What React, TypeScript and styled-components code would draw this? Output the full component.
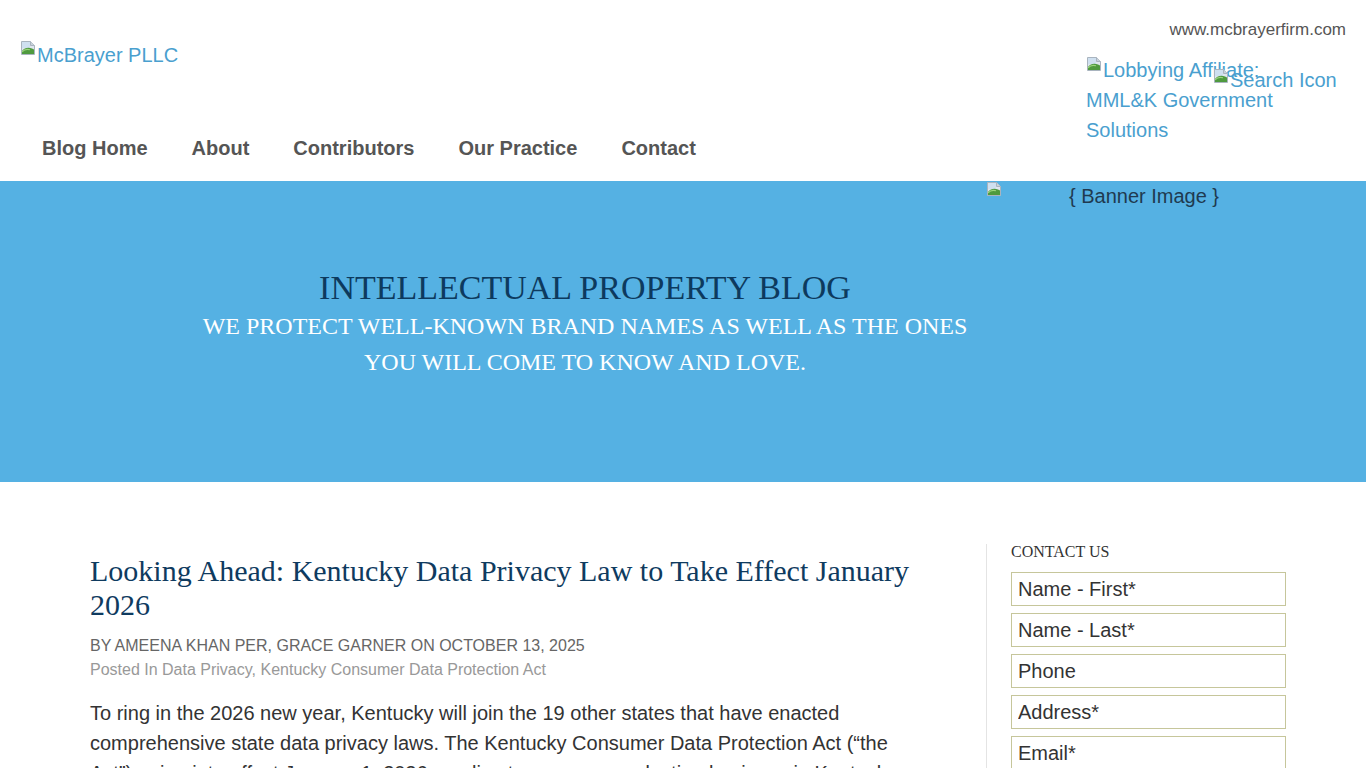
import React from 'react'
import styled, { createGlobalStyle } from 'styled-components'

const GlobalStyle = createGlobalStyle`
  html, body {
    margin: 0;
    padding: 0;
    background: #fff;
  }
  body {
    font-family: 'Liberation Sans', Arial, sans-serif;
    color: #333;
  }
  * {
    box-sizing: border-box;
  }
`

// the little "broken image" glyph that Chrome shows next to alt text
const BrokenIcon = () => (
  <IconSvg width='16' height='16' viewBox='0 0 16 16' aria-hidden='true'>
    <path d='M1.5 1.5h9l4 4v9h-13z' fill='#dfe6ee' stroke='#a9b4bf' />
    <path d='M10.5 1.5v4h4' fill='#c9d2db' stroke='#a9b4bf' />
    <path d='M2 2h8v6H2z' fill='#cfe0f0' />
    <path d='M2 14V11c2.5-3 6-4 10-2.4L14 9.5V14z' fill='#4f9a3f' />
    <path d='M2 11.8c2.2-2.3 5-3 8-2' fill='none' stroke='#9bd47c' strokeWidth='1.2' />
  </IconSvg>
)

const navItems = ['Blog Home', 'About', 'Contributors', 'Our Practice', 'Contact']

const fields = ['Name - First*', 'Name - Last*', 'Phone', 'Address*', 'Email*']

const App = () => {
  return (
    <>
      <GlobalStyle />
      <Header>
        <HeaderLeft>
          <Logo href='#'>
            <BrokenIcon />
            McBrayer PLLC
          </Logo>
          <Nav>
            {navItems.map((item) => (
              <NavLink key={item} href='#'>
                {item}
              </NavLink>
            ))}
          </Nav>
        </HeaderLeft>
        <HeaderRight>
          <SiteUrl href='#'>www.mcbrayerfirm.com</SiteUrl>
          <AffiliateRow>
            <Affiliate href='#'>
              <BrokenIcon />
              Lobbying Affiliate: MML&amp;K Government Solutions
            </Affiliate>
            <SearchButton href='#'>
              <BrokenIcon />
              Search Icon
            </SearchButton>
          </AffiliateRow>
        </HeaderRight>
      </Header>

      <Banner>
        <BannerText>
          <BannerTitle>Intellectual Property Blog</BannerTitle>
          <BannerTagline>
            We protect well-known brand names as well as the ones
            <br />
            you will come to know and love.
          </BannerTagline>
        </BannerText>
        <BannerImage>
          <BrokenIcon />
          <span>{'{ Banner Image }'}</span>
        </BannerImage>
      </Banner>

      <Main>
        <Article>
          <PostTitle>
            Looking Ahead: Kentucky Data Privacy Law to Take Effect January 2026
          </PostTitle>
          <Byline>By Ameena Khan Per, Grace Garner on October 13, 2025</Byline>
          <PostedIn>
            Posted In <CatLink href='#'>Data Privacy</CatLink>,{' '}
            <CatLink href='#'>Kentucky Consumer Data Protection Act</CatLink>
          </PostedIn>
          <Body>
            To ring in the 2026 new year, Kentucky will join the 19 other states that have enacted
            comprehensive state data privacy laws. The Kentucky Consumer Data Protection Act (“the
            Act”) going into effect January 1, 2026, applies to persons conducting business in Kentucky
            or producing products or services that are targeted to residents of the Commonwealth.
          </Body>
          <Body>
            Businesses that control or process the personal data of Kentucky consumers should begin
            reviewing their privacy practices now to prepare for the new obligations.
          </Body>
        </Article>

        <Sidebar>
          <SideHeading>Contact Us</SideHeading>
          <ContactForm onSubmit={(e) => e.preventDefault()}>
            {fields.map((f) => (
              <Field key={f} placeholder={f} aria-label={f} />
            ))}
          </ContactForm>
        </Sidebar>
      </Main>
    </>
  )
}

const IconSvg = styled.svg`
  display: inline-block;
  vertical-align: -1px;
  flex: none;
`

const Header = styled.header`
  display: flex;
  justify-content: space-between;
  height: 181px;
  padding: 0 20px;
`
const HeaderLeft = styled.div`
  display: flex;
  flex-direction: column;
  justify-content: space-between;
`
const Logo = styled.a`
  display: block;
  padding-top: 40px;
  font-size: 20px;
  line-height: 30px;
  color: #4a9fcf;
  text-decoration: none;

  svg {
    vertical-align: 6px;
    margin-right: 1px;
  }
`
const Nav = styled.nav`
  display: flex;
  align-items: center;
  height: 66px;
`
const NavLink = styled.a`
  padding: 0 22px;
  font-size: 20px;
  font-weight: bold;
  color: #555;
  text-decoration: none;

  &:hover {
    color: #4a9fcf;
  }
`
const HeaderRight = styled.div`
  display: flex;
  flex-direction: column;
  align-items: flex-end;
`
const SiteUrl = styled.a`
  padding-top: 20px;
  font-size: 17px;
  line-height: 20px;
  color: #555;
  text-decoration: none;
`
const AffiliateRow = styled.div`
  position: relative;
  margin-top: 15px;
  margin-right: 60px;
  width: 200px;
`
const Affiliate = styled.a`
  display: block;
  font-size: 20px;
  line-height: 30px;
  color: #4a9fcf;
  text-decoration: none;

  svg {
    vertical-align: 5px;
    margin-right: 1px;
  }
`
const SearchButton = styled.a`
  position: absolute;
  top: 10px;
  left: 127px;
  white-space: nowrap;
  font-size: 20px;
  line-height: 30px;
  color: #4a9fcf;
  text-decoration: none;

  svg {
    vertical-align: 3px;
    margin-right: 1px;
  }
`

const Banner = styled.section`
  position: relative;
  height: 301px;
  background: #55b1e3;
  padding-top: 86px;
`
const BannerText = styled.div`
  width: 1170px;
  text-align: center;
  font-family: 'Liberation Serif', 'Times New Roman', serif;
  text-transform: uppercase;
`
const BannerTitle = styled.h1`
  margin: 0;
  font-size: 34px;
  line-height: 41px;
  font-weight: normal;
  color: #0d3a5e;
`
const BannerTagline = styled.p`
  margin: 0;
  font-size: 24px;
  line-height: 36px;
  color: #fff;
`
const BannerImage = styled.div`
  position: absolute;
  top: 0;
  left: 986px;
  width: 316px;
  display: flex;
  align-items: flex-start;
  font-size: 20px;
  line-height: 30px;
  color: #203a50;

  span {
    flex: 1;
    text-align: center;
    padding-right: 16px;
  }
`

const Main = styled.main`
  display: flex;
  align-items: flex-start;
  padding-top: 62px;
`
const Article = styled.article`
  width: 830px;
  margin-left: 90px;
  margin-right: 20px;
  padding-top: 10px;
`
const PostTitle = styled.h2`
  margin: 0;
  font-family: 'Liberation Serif', 'Times New Roman', serif;
  font-size: 30px;
  line-height: 34px;
  font-weight: normal;
  color: #0f3b5f;
`
const Byline = styled.div`
  margin-top: 12px;
  font-size: 16px;
  line-height: 24px;
  text-transform: uppercase;
  color: #666;
`
const PostedIn = styled.div`
  font-size: 16px;
  line-height: 24px;
  color: #999;
`
const CatLink = styled.a`
  color: #999;
  text-decoration: none;
`
const Body = styled.p`
  margin: 16px 0 0;
  font-size: 20px;
  line-height: 30px;
  color: #333;
`
const Sidebar = styled.aside`
  margin-left: 46px;
  padding-left: 24px;
  border-left: 1px solid #e4e4e4;
  width: 310px;
  min-height: 400px;
`
const SideHeading = styled.h3`
  margin: 0;
  font-family: 'Liberation Serif', 'Times New Roman', serif;
  font-size: 16px;
  line-height: 16px;
  font-weight: normal;
  text-transform: uppercase;
  color: #333;
`
const ContactForm = styled.form`
  display: flex;
  flex-direction: column;
  gap: 7px;
  margin-top: 12px;
`
const Field = styled.input`
  width: 275px;
  height: 34px;
  padding: 0 6px;
  border: 1px solid #c6c69b;
  border-radius: 0;
  font-family: 'Liberation Sans', Arial, sans-serif;
  font-size: 20px;
  color: #333;
  outline: none;

  &::placeholder {
    color: #333;
    opacity: 1;
  }
`

export default App
